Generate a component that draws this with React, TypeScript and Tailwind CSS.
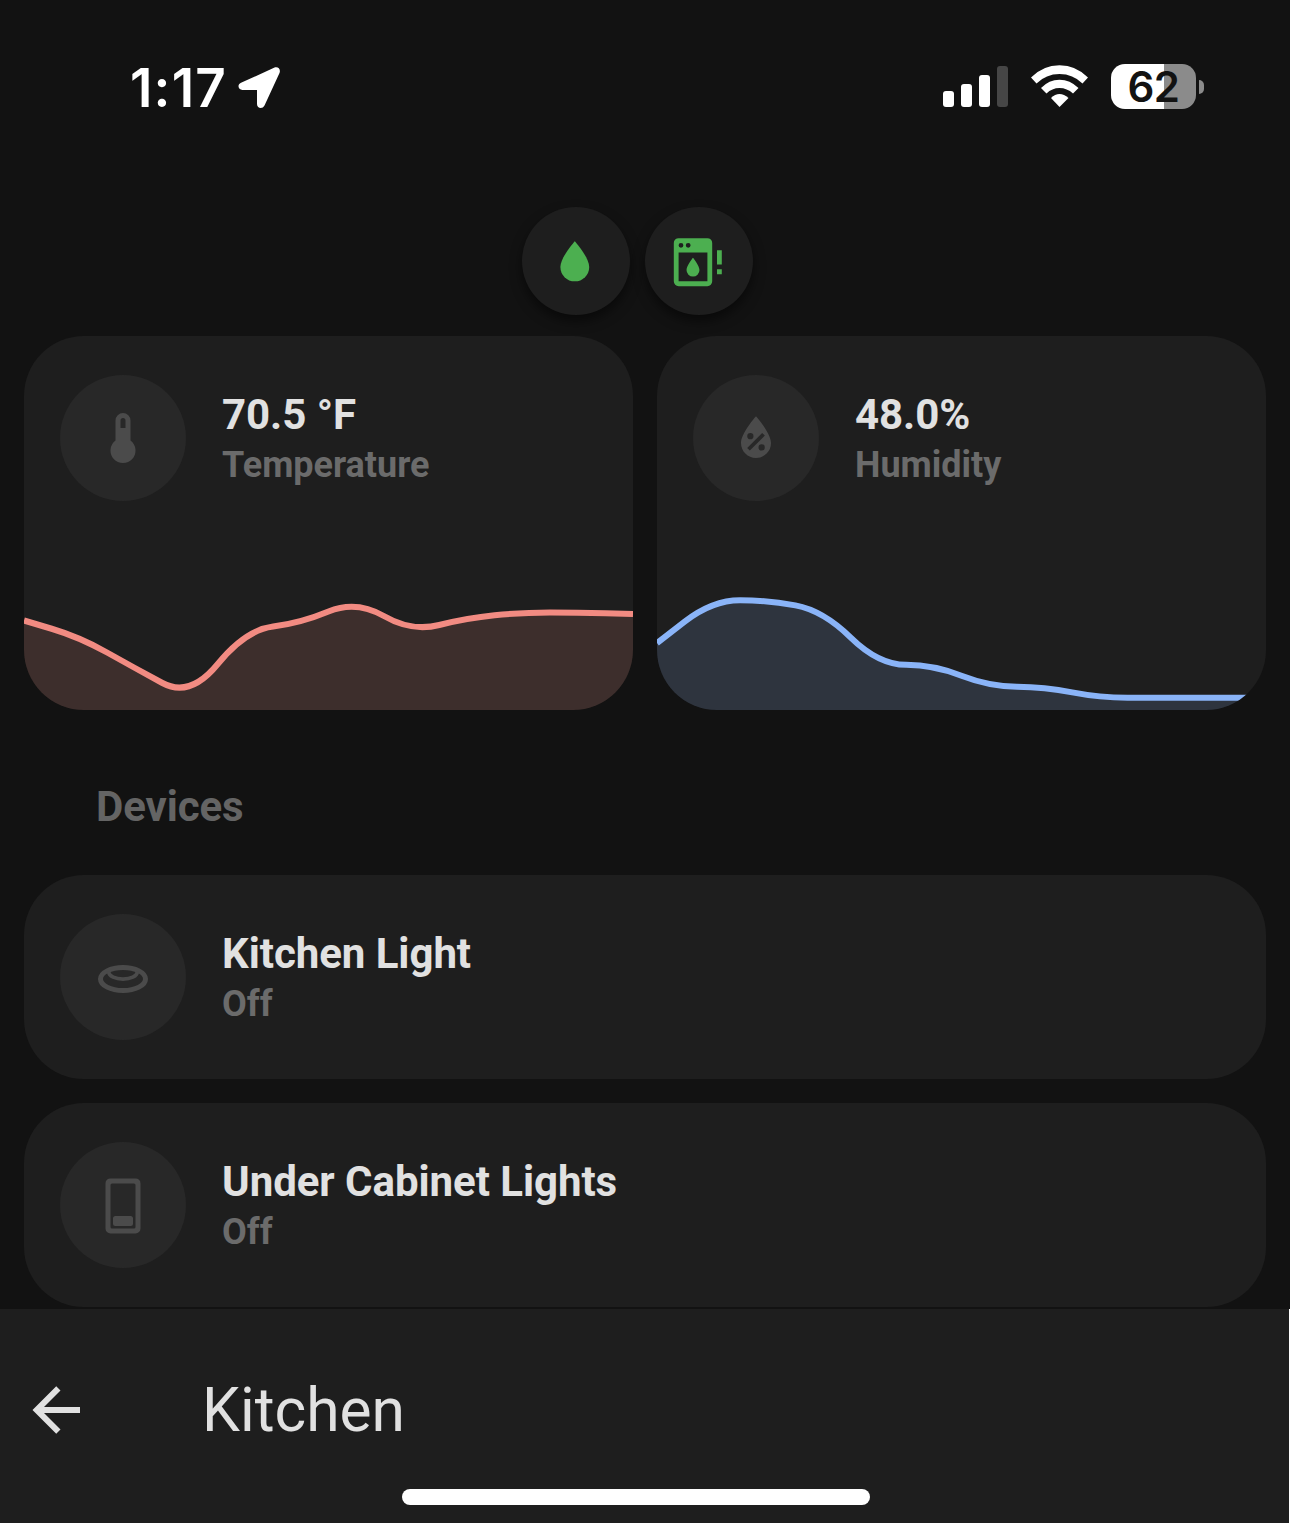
import type { ReactNode } from "react";

const STEP = 609 / 11;

// Smooths evenly spaced samples with quadratic segments joined at their midpoints.
function smooth(ys: number[]) {
  let d = `M0,${ys[0]}`;
  for (let i = 0; i < ys.length - 1; i++) {
    d += ` Q${i * STEP},${ys[i]} ${(i + 0.5) * STEP},${(ys[i] + ys[i + 1]) / 2}`;
  }
  return `${d} L609,${ys[ys.length - 1]}`;
}

function Graph({ ys, color }: { ys: number[]; color: string }) {
  const line = smooth(ys);
  return (
    <svg className="block h-[134px] w-full" viewBox="0 0 609 134" fill="none">
      <path d={`${line} V134 H0 Z`} fill={color} fillOpacity="0.15" />
      <path d={line} stroke={color} strokeWidth="6" />
    </svg>
  );
}

function Icon({ children, className }: { children: ReactNode; className: string }) {
  return (
    <svg viewBox="0 0 24 24" fill="currentColor" fillRule="evenodd" className={className}>
      {children}
    </svg>
  );
}

function Entity({ icon, title, sub }: { icon: ReactNode; title: string; sub: string }) {
  return (
    <div className="flex items-center gap-9 px-9 pt-[39px]">
      <div className="flex size-[126px] items-center justify-center rounded-full bg-[#282828] text-[#4b4b4b]">
        <Icon className="size-[60px]">{icon}</Icon>
      </div>
      <div className="whitespace-nowrap">
        <div className="text-[42px] leading-[54px] font-bold tracking-[-0.05px] text-[#e1e1e1]">{title}</div>
        <div className="-mt-px text-[36px] leading-[48px] font-bold text-[#6b6b6b]">{sub}</div>
      </div>
    </div>
  );
}

function Badge({ children }: { children: ReactNode }) {
  return (
    <div className="size-[108px] rounded-full bg-[#1e1e1e] pt-[26px] pl-6 text-[#4caf50] shadow-[0_6px_12px_rgba(0,0,0,0.5)]">
      <Icon className="size-[57.6px]">
        <g transform="translate(0 .15)">{children}</g>
      </Icon>
    </div>
  );
}

export default function App() {
  return (
    <div className="flex h-[1525px] w-[1290px] flex-col overflow-hidden bg-white font-['Roboto',sans-serif]">
      <div className="h-[1309px] shrink-0 bg-[#121212]">
        <header className="flex h-[207px] justify-between pt-[60px] pr-[86px] pl-[130px] text-white">
          <div className="flex h-[58px] items-center gap-[11px] font-['Inter',sans-serif] text-[53px] font-semibold tracking-[1.2px]">
            1:17
            <svg className="h-[44px] w-[44px]" viewBox="0 0 44 44" fill="white">
              <path d="M36 .8C40 -.8 43 2 41.500 6L26.500 38.500C24.500 42.500 19 41.500 19 37V23H4.500C0 23 -1 17.500 3 15.800Z" />
            </svg>
          </div>
          <div className="flex h-[53px] items-center">
            <svg className="h-[43px] w-[66px]" viewBox="0 0 66 43" fill="white">
              <rect x="0" y="26" width="11" height="16" rx="3" />
              <rect x="18" y="19" width="11" height="23" rx="3" />
              <rect x="36" y="10" width="11" height="32" rx="3" />
              <rect x="54" y="1" width="11" height="41" rx="3" opacity="0.22" />
            </svg>
            <svg className="ml-[22px] h-[43px] w-[58px]" viewBox="0 0 58 43" fill="white">
              <path d="M0 12.500Q12 .2 28.500 .2T57 12.500L51.500 18.500Q42 9 28.500 9T5.500 18.500Z" />
              <path d="M10 23Q18 14.700 28.500 14.700T47.500 23L42 28.500Q36 23 28.500 23T15.500 28.500Z" />
              <path d="M20 33Q24 29 28.500 29T37.500 33L28.500 42Z" />
            </svg>
            <div className="ml-[22px] flex items-center gap-[3px]">
              <div className="flex h-[45px] w-[85px] items-center justify-center rounded-[14px] bg-[linear-gradient(to_right,#fff_53px,#8b8b8b_53px)] font-['Inter',sans-serif] text-[42px] font-semibold tracking-[-0.5px] text-[#121212]">
                62
              </div>
              <div className="h-[14px] w-[5px] rounded-r-full bg-[#8b8b8b]" />
            </div>
          </div>
        </header>

        <div className="flex h-[129px] gap-[15px] pl-[522px]">
          <Badge>
            <path d="M12,20A6,6 0 0,1 6,14C6,10 12,3.250 12,3.250C12,3.250 18,10 18,14A6,6 0 0,1 12,20Z" />
          </Badge>
          <Badge>
            <path d="M4 2H16A2 2 0 0 1 18 4V20A2 2 0 0 1 16 22H4A2 2 0 0 1 2 20V4A2 2 0 0 1 4 2M4 8V20H16V8ZM5 4A1 1 0 0 0 5 6A1 1 0 0 0 5 4M8 4A1 1 0 0 0 8 6A1 1 0 0 0 8 4M20 7H22V13H20ZM20 15H22V17H20ZM10 18A2.700 2.700 0 0 1 7.300 15.300C7.300 13.500 10 10.200 10 10.200C10 10.200 12.700 13.500 12.700 15.300A2.700 2.700 0 0 1 10 18" />
          </Badge>
        </div>

        <main className="px-6">
          <div className="grid grid-cols-2 gap-6">
            <section className="flex h-[374px] flex-col justify-between overflow-hidden rounded-[60px] bg-[#1e1e1e]">
              <Entity
                title="70.5 °F"
                sub="Temperature"
                icon={<path d="M15 13V5A3 3 0 0 0 9 5V13A5 5 0 1 0 15 13M12 4A1 1 0 0 1 13 5V8H11V5A1 1 0 0 1 12 4Z" />}
              />
              <Graph color="#f28b82" ys={[44.5, 61, 92, 122, 54, 47, 24, 56, 42, 36.5, 36.5, 38]} />
            </section>
            <section className="flex h-[374px] flex-col justify-between overflow-hidden rounded-[60px] bg-[#1e1e1e]">
              <Entity
                title="48.0%"
                sub="Humidity"
                icon={
                  <path d="M12,3.250C12,3.250 6,10 6,14C6,17.320 8.690,20 12,20A6,6 0 0,0 18,14C18,10 12,3.250 12,3.250M14.470,9.970L15.530,11.030L9.530,17.030L8.470,15.970M9.750,10A1.250,1.250 0 0,1 11,11.250A1.250,1.250 0 0,1 9.750,12.500A1.250,1.250 0 0,1 8.500,11.250A1.250,1.250 0 0,1 9.750,10M14.250,14.500A1.250,1.250 0 0,1 15.500,15.750A1.250,1.250 0 0,1 14.250,17A1.250,1.250 0 0,1 13,15.750A1.250,1.250 0 0,1 14.250,14.500Z" />
                }
              />
              <Graph color="#8ab4f8" ys={[67, 24.3, 24.3, 34.5, 88.7, 89, 110.5, 111, 121.7, 121.7, 121.7, 121.7]} />
            </section>
          </div>

          <h2 className="flex h-[165px] items-center pt-7 pl-[72px] text-[42px] font-bold tracking-[-0.1px] text-[#646464]">
            Devices
          </h2>

          <div className="flex flex-col gap-6">
            <section className="h-[204px] rounded-[60px] bg-[#1e1e1e]">
              <Entity
                title="Kitchen Light"
                sub="Off"
                icon={
                  <g fill="none" stroke="currentColor">
                    <ellipse cx="12" cy="12.800" rx="9" ry="4.600" strokeWidth="2" />
                    <path d="M6.300 9.800C6.300 13.800 17.700 13.800 17.700 9.800" strokeWidth="1.500" />
                  </g>
                }
              />
            </section>
            <section className="h-[204px] rounded-[60px] bg-[#1e1e1e]">
              <Entity
                title="Under Cabinet Lights"
                sub="Off"
                icon={
                  <path
                    transform="translate(0 .35)"
                    d="M7 1H17A2 2 0 0 1 19 3V21A2 2 0 0 1 17 23H7A2 2 0 0 1 5 21V3A2 2 0 0 1 7 1M7.600 3A.6 .6 0 0 0 7 3.600V20.400A.6 .6 0 0 0 7.600 21H16.400A.6 .6 0 0 0 17 20.400V3.600A.6 .6 0 0 0 16.400 3ZM9 16H15A1 1 0 0 1 16 17V19A1 1 0 0 1 15 20H9A1 1 0 0 1 8 19V17A1 1 0 0 1 9 16"
                  />
                }
              />
            </section>
          </div>
        </main>
      </div>

      <footer className="flex h-[214px] w-[1289px] shrink-0 flex-col bg-[#1e1e1e] text-[#e1e1e1]">
        <div className="flex h-[180px] items-center pt-[22px] pl-5">
          <Icon className="size-[72px]">
            <path d="M20,11V13H8L13.500,18.500L12.080,19.920L4.160,12L12.080,4.080L13.500,5.500L8,11H20Z" />
          </Icon>
          <h1 className="ml-[110px] pt-0.5 text-[60.5px] leading-[72px]">Kitchen</h1>
        </div>
        <div className="ml-[402px] h-4 w-[468px] rounded-full bg-white" />
      </footer>
    </div>
  );
}
